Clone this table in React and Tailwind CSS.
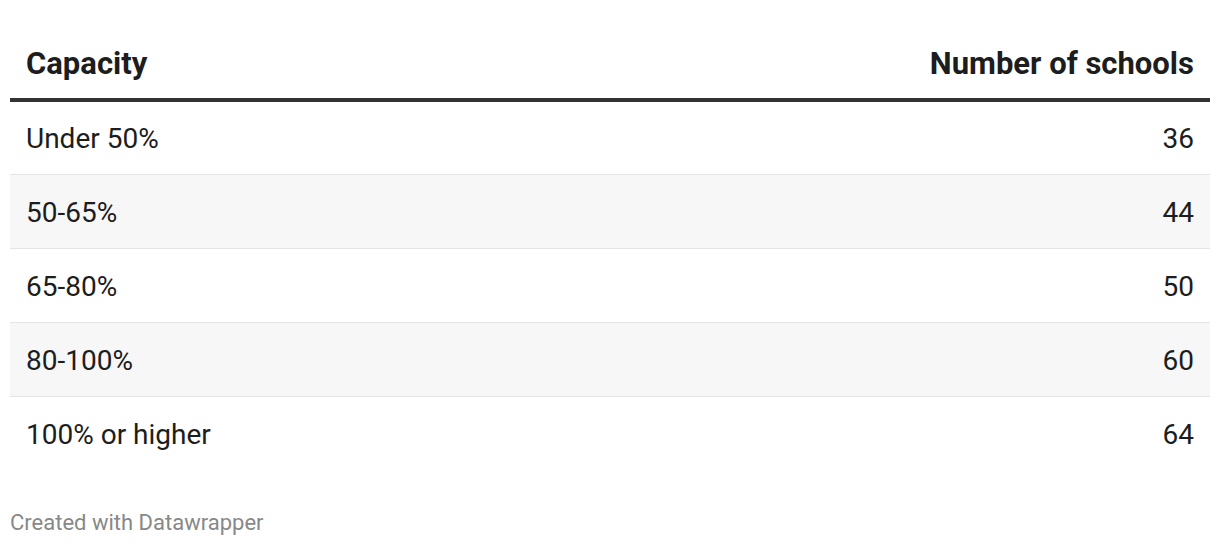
const rows = [
  { label: 'Under 50%', value: 36 },
  { label: '50-65%', value: 44 },
  { label: '65-80%', value: 50 },
  { label: '80-100%', value: 60 },
  { label: '100% or higher', value: 64 },
];

export default function App() {
  return (
    <div className="bg-white w-[1220px] h-[546px] px-[10px] pt-[41px] font-['Roboto',sans-serif] text-[#1d1d1d]">
      <table className="w-full border-collapse">
        <thead>
          <tr className="border-b-4 border-[#333333]">
            <th className="text-left font-bold text-[31px] leading-[46px] pl-4 pb-[11px]">Capacity</th>
            <th className="text-right font-bold text-[31px] leading-[46px] pr-4 pb-[11px]">Number of schools</th>
          </tr>
        </thead>
        <tbody>
          {rows.map((row, i) => (
            <tr
              key={row.label}
              className={`${i % 2 === 1 ? 'bg-[#f7f7f7]' : 'bg-white'} ${i < rows.length - 1 ? 'border-b border-[#e5e5e5]' : ''}`}
            >
              <td className="text-left text-[28px] h-[74px] pl-4 pt-[3px]">{row.label}</td>
              <td className="text-right text-[28px] h-[74px] pr-4 pt-[3px]">{row.value}</td>
            </tr>
          ))}
        </tbody>
      </table>
      <div className="mt-[36px] text-[22px] text-[#888888]">Created with Datawrapper</div>
    </div>
  );
}
